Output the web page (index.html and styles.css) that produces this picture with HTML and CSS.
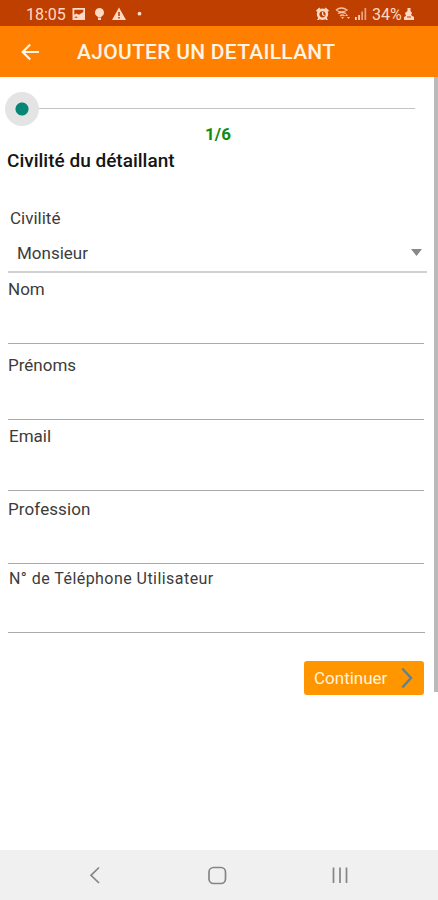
FILE: index.html
```html
<!DOCTYPE html>
<html lang="fr">
<head>
<meta charset="utf-8">
<title>Ajouter un détaillant</title>
<link rel="stylesheet" href="styles.css">
</head>
<body>
<div class="screen">
  <div class="status">
    <span class="clock">18:05</span>
    <svg class="status-left" width="80" height="26" viewBox="0 0 80 26" fill="#ffd9c4">
      <path fill-rule="evenodd" d="M1.500 8h12.500v12H1.500zM3.300 9.800v5l2.200-1.300 2.500 1.300 4.300-2.800V9.800zM3.300 17.800h3.500l-1.700-1.600z"/>
      <path d="M28.500 8a4.500 4.500 0 0 1 2 8.500l-.5 1h-3l-.5-1A4.500 4.500 0 0 1 28.500 8zM27 18h3v2h-3z"/>
      <path fill-rule="evenodd" d="M48 7.500L55 20H41zM47.200 12v4h1.600v-4zM47.200 17v1.500h1.600V17z"/>
      <circle cx="68.500" cy="13.700" r="1.900"/>
    </svg>
    <svg class="status-right" width="56" height="26" viewBox="0 0 56 26" fill="#ffd9c4">
      <path fill-rule="evenodd" d="M7.500 8.500a5.700 5.700 0 1 1 0 11.400a5.700 5.700 0 0 1 0-11.400zM7.500 11.200a3.100 3.100 0 1 0 0 6.200a3.100 3.100 0 0 0 0-6.200z"/>
      <path d="M7 12h1.300v2.300l1.500 1-.7 1L7 15zM1 10.500l3.400-3 1.200 1.500-3.400 3zM14 10.500l-3.400-3-1.200 1.500 3.400 3zM2 20l1.500-2.500 1.500 1.300L4 20zM13 20l-1.500-2.500-1.500 1.300 1 1.200z"/>
      <g fill="none" stroke="#ffd9c4" stroke-width="1.300" opacity=".85"><path d="M21 10q5.500-4 11 0q-5.500 4-11 0M23 13.500q4-2 8 0M25 16q2.500-2 4.500 0"/></g>
      <path opacity=".85" d="M26 17h3l-1.500 2zM30 16l1.500-2 1.500 2zM32 17h3l-1.500 2z"/>
      <path d="M40 17h1.700v3H40zM43.200 15h1.700v5h-1.700z"/><path opacity=".65" d="M46.300 11.500H48V20h-1.700zM49.500 8h1.700v12h-1.700z"/>
    </svg>
    <span class="percent">34%</span>
    <svg class="battery" width="12" height="26" viewBox="0 0 12 26" fill="#ffd9c4">
      <path d="M4.500 8h3v3l1.500 2-1 2 3 2v3H1v-3l2-1-1-3 2.500-2z"/><path d="M4 16.500h4v1H4z" fill="#bf3f00"/>
    </svg>
  </div>
  <header class="toolbar">
    <svg width="18" height="18" viewBox="0 0 18 18" fill="none" stroke="#fff4e6" stroke-width="2.200"><path d="M18 9H2M9.200 1.500L1.700 9l7.500 7.500"/></svg>
    <h1>AJOUTER UN DETAILLANT</h1>
  </header>
  <main class="content">
    <form class="form">
      <div class="slider"><span class="thumb"></span><span class="track"></span></div>
      <div class="step">1/6</div>
      <h2>Civilité du détaillant</h2>
      <div class="field civility">
        <label>Civilité</label>
        <div class="select"><span>Monsieur</span><svg width="11" height="7" viewBox="0 0 11 7"><path d="M0 0h11L5.500 7z" fill="#888"/></svg></div>
      </div>
      <div class="field nom"><label>Nom</label></div>
      <div class="field prenoms"><label>Prénoms</label></div>
      <div class="field email"><label>Email</label></div>
      <div class="field profession"><label>Profession</label></div>
      <div class="field phone"><label>N° de Téléphone Utilisateur</label></div>
      <button type="button" class="next"><span>Continuer</span><svg width="12" height="22" viewBox="0 0 12 22" fill="none" stroke="#5f8391" stroke-width="2.500"><path d="M1.300 1.500L10 11 1.300 20.500"/></svg></button>
    </form>
    <div class="scrollbar"></div>
  </main>
  <nav class="navbar">
    <svg width="438" height="50" viewBox="0 0 438 50" fill="none" stroke="#858585" stroke-width="1.700">
      <path d="M99 17.500L91 25.300l8 7.700"/>
      <rect x="209" y="17.500" width="16.500" height="16" rx="4.500"/>
      <path d="M333.500 17.500v15.500M340 17.500v15.500M346.500 17.500v15.500"/>
    </svg>
  </nav>
</div>
</body>
</html>
```
FILE: styles.css
```css
* { box-sizing: border-box; }
body { margin: 0; font-family: Roboto, "Liberation Sans", sans-serif; background: #fff; }
.screen { width: 438px; height: 900px; display: flex; flex-direction: column; overflow: hidden; }
.status { height: 26px; flex: none; display: flex; align-items: center; background: #bf3f00; color: #ffd9c4; font-size: 16px; line-height: 26px; padding-left: 26px; }
.status span { padding-top: 3px; }
.clock { width: 45px; }
.status-right { margin-left: 164px; }
.percent { width: 31px; margin-left: 1px; }
.toolbar { height: 51px; flex: none; display: flex; align-items: center; background: #ff8000; padding-left: 21px; }
.toolbar h1 { margin: 0 0 0 38px; color: #fff4e6; font-size: 21px; line-height: 24px; font-weight: 500; letter-spacing: .28px; white-space: nowrap; }
.content { flex: 1; display: flex; align-items: flex-start; min-height: 0; }
.form { width: 434px; padding: 14px 0 0 7px; display: flex; flex-direction: column; }
.slider { height: 35px; display: flex; align-items: center; margin-left: -2px; }
.thumb { width: 34px; height: 34px; flex: none; border-radius: 50%; background: radial-gradient(circle, #078575 6px, #e4e4e4 7px); }
.track { width: 376px; height: 1px; background: #c4c4c4; }
.step { height: 17px; margin-right: 5px; text-align: center; color: #118a11; font-size: 17px; line-height: 17px; font-weight: 700; }
h2 { height: 24px; margin: 6px 0 0; color: #151515; font-size: 19px; line-height: 24px; font-weight: 500; }
.field { width: 416px; border-bottom: 1px solid #aaa; color: #3c3c3c; font-size: 17px; line-height: 20px; margin-left: 1px; }
.field label { display: block; }
.civility { width: 419px; height: 100px; border-bottom: 2px solid #d2d2d2; padding-top: 35px; }
.civility label { padding-left: 2px; }
.select { display: flex; justify-content: space-between; align-items: center; padding: 15px 5px 0 9px; }
.select svg { margin-top: -2px; }
.nom { height: 71px; padding-top: 6px; }
.prenoms { height: 76px; padding-top: 11px; }
.email { height: 71px; padding: 6px 0 0 1px; }
.profession { height: 73px; padding-top: 8px; letter-spacing: .1px; }
.phone { width: 417px; height: 69px; padding: 5px 0 0 1px; font-size: 16px; letter-spacing: .45px; }
.next { width: 120px; height: 34px; align-self: flex-end; display: flex; align-items: center; justify-content: space-between; margin: 28px 10px 0 0; padding: 0 11px 0 10px; border: 0; border-radius: 3px; background: #ff9600; color: #fff4df; font: 400 17px/34px Roboto, sans-serif; }
.scrollbar { width: 4px; height: 615px; background: #bababa; }
.navbar { height: 50px; flex: none; background: #f0f0f0; }
.navbar svg { display: block; }
```
